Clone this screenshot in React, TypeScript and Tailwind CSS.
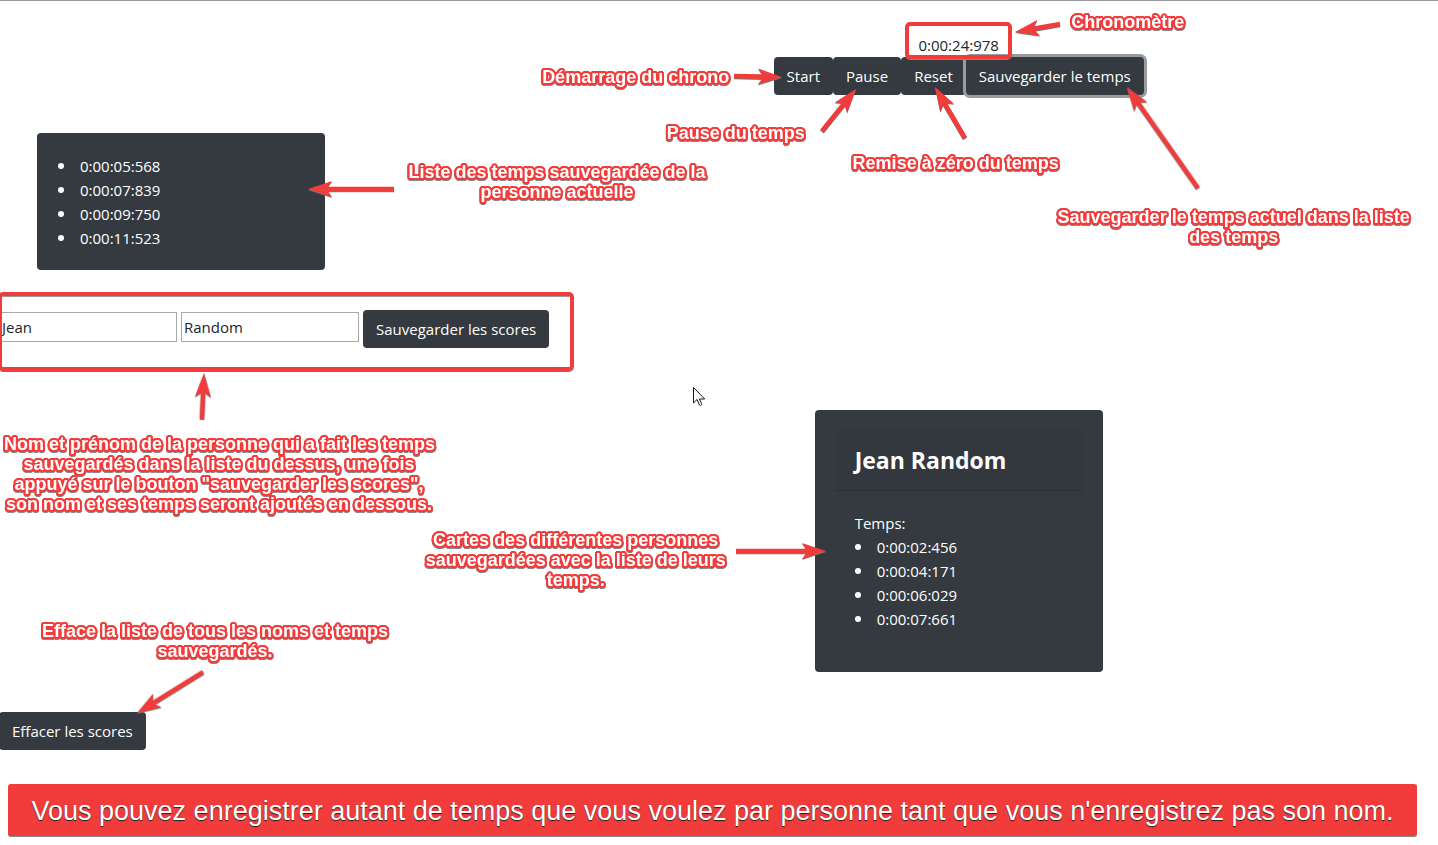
import { useState, type ReactNode } from "react";

const currentTimes = ["0:00:05:568", "0:00:07:839", "0:00:09:750", "0:00:11:523"];
const savedTimes = ["0:00:02:456", "0:00:04:171", "0:00:06:029", "0:00:07:661"];

function DarkButton({ children, className = "" }: { children: ReactNode; className?: string }) {
  return (
    <button
      type="button"
      className={`h-[38px] rounded-sm bg-[#343a40] px-[13px] leading-6 whitespace-nowrap text-white ${className}`}
    >
      {children}
    </button>
  );
}

type Segment = { from: [number, number]; to: [number, number] };

/* Each arrow is drawn pointing right with its tip at the origin, then turned. */
function Arrows({ segments }: { segments: Segment[] }) {
  return (
    <svg
      width="1"
      height="1"
      aria-hidden="true"
      className="absolute top-0 left-0 overflow-visible fill-[#f23c3c] drop-shadow-[0_1px_0_#777]"
    >
      {segments.map(({ from, to }) => {
        const dx = to[0] - from[0];
        const dy = to[1] - from[1];
        const len = Math.hypot(dx, dy);
        const angle = (Math.atan2(dy, dx) * 180) / Math.PI;
        return (
          <path
            key={from.join()}
            transform={`translate(${to[0]} ${to[1]}) rotate(${angle})`}
            d={`M0 0 L-24 -8 L-20 -2.3 L${-len} -2.3 L${-len} 2.3 L-20 2.3 L-24 8 Z`}
          />
        );
      })}
    </svg>
  );
}

function Note({ lines, className }: { lines: string[]; className: string }) {
  return (
    <p
      className={`absolute text-center font-['Liberation_Sans',Arial,sans-serif] text-[18px] leading-5 font-bold whitespace-nowrap text-white drop-shadow-[0_1px_0_#888] [text-shadow:2px_0_#f23c3c,-2px_0_#f23c3c,0_2px_#f23c3c,0_-2px_#f23c3c,2px_1px_#f23c3c,2px_-1px_#f23c3c,-2px_1px_#f23c3c,-2px_-1px_#f23c3c,1px_2px_#f23c3c,-1px_2px_#f23c3c,1px_-2px_#f23c3c,-1px_-2px_#f23c3c,0_0_1px_#f23c3c] ${className}`}
    >
      {lines.map((line) => (
        <span key={line} className="block">
          {line}
        </span>
      ))}
    </p>
  );
}

function TimeList({ times }: { times: string[] }) {
  return (
    <ul>
      {times.map((time) => (
        <li key={time} className="flex items-center gap-4">
          <span className="size-[6px] rounded-full bg-white" />
          {time}
        </li>
      ))}
    </ul>
  );
}

const leftArrows: Segment[] = [
  { from: [394, 189], to: [308, 189] },
  { from: [202, 419], to: [204, 373] },
  { from: [203, 672], to: [137, 713] },
];

const rightArrows: Segment[] = [
  { from: [101, 24], to: [56, 32] },
  { from: [-225, 76], to: [-177, 77] },
  { from: [-137, 131], to: [-103, 89] },
  { from: [6, 138], to: [-24, 87] },
  { from: [239, 188], to: [168, 87] },
  { from: [-223, 551], to: [-133, 551] },
];

export default function App() {
  const [firstName, setFirstName] = useState("Jean");
  const [lastName, setLastName] = useState("Random");
  const field =
    "h-[30px] w-[178px] border border-[#a9a9a9] bg-white px-[2px] text-[#212529] outline-none";

  return (
    <main className="relative overflow-hidden border-t border-[#9b9b9b] bg-white pb-2 font-['Open_Sans','Noto_Sans',sans-serif] text-[15px] leading-6 text-[#212529]">
      <section className="grid grid-cols-3 pt-8">
        <div className="col-span-2 col-start-2 flex flex-col items-center">
          <div className="relative">
            <time>0:00:24:978</time>
            <span className="pointer-events-none absolute -inset-x-[13px] -top-[11px] -bottom-[2px] z-10 rounded-[5px] border-4 border-[#f23c3c] shadow-[0_1px_0_#888]" />
          </div>
          <div className="flex">
            <DarkButton>Start</DarkButton>
            <DarkButton>Pause</DarkButton>
            <DarkButton>Reset</DarkButton>
            <DarkButton className="shadow-[0_0_0_3px_#999c9f]">Sauvegarder le temps</DarkButton>
          </div>
        </div>
      </section>

      <section className="mt-[38px] ml-[37px] w-72 rounded-sm bg-[#343a40] px-[21px] pt-[21px] pb-5 text-white">
        <TimeList times={currentTimes} />
      </section>

      <form className="relative mt-10 -ml-px flex w-fit gap-1">
        <input
          aria-label="Prénom"
          className={`mt-[2px] ${field}`}
          value={firstName}
          onChange={(e) => setFirstName(e.target.value)}
        />
        <input
          aria-label="Nom"
          className={`mt-[2px] ${field}`}
          value={lastName}
          onChange={(e) => setLastName(e.target.value)}
        />
        <DarkButton>Sauvegarder les scores</DarkButton>
        <span className="pointer-events-none absolute -top-[18px] -right-[25px] -bottom-[23px] -left-px rounded-[5px] border-4 border-[#f23c3c] shadow-[0_1px_0_#777,inset_0_1px_0_#999]" />
      </form>

      <section className="mt-[62px] grid grid-cols-3">
        <article className="col-span-2 col-start-2 w-72 justify-self-center rounded-sm bg-[#343a40] px-5 pt-5 pb-[41px] text-white">
          <h2 className="rounded-t-sm border-b border-[#2d3237] bg-[#33383e] px-5 py-[18px] text-[23px] leading-6 font-bold">
            Jean Random
          </h2>
          <div className="px-5 pt-5">
            <p>Temps:</p>
            <TimeList times={savedTimes} />
          </div>
        </article>
      </section>

      <DarkButton className="mt-10 -ml-px block">Effacer les scores</DarkButton>

      <p className="mt-[34px] mr-[21px] ml-2 rounded-[3px] bg-[#f23c3c] pt-[11px] pb-[9px] text-center font-['Liberation_Sans',Arial,sans-serif] text-[27px] leading-8 text-white shadow-[0_1px_0_#888] [text-shadow:0_1px_1px_#222]">
        Vous pouvez enregistrer autant de temps que vous voulez par personne tant que vous
        n'enregistrez pas son nom.
      </p>

      <div className="pointer-events-none absolute -top-px left-0 z-20">
        <Arrows segments={leftArrows} />
        <Note
          className="top-[162px] left-[407px] w-[300px]"
          lines={["Liste des temps sauvegardée de la", "personne actuelle"]}
        />
        <Note
          className="top-[434px] left-[4px] w-[430px]"
          lines={[
            "Nom et prénom de la personne qui a fait les temps",
            "sauvegardés dans la liste du dessus, une fois",
            'appuyé sur le bouton "sauvegarder les scores",',
            "son nom et ses temps seront ajoutés en dessous.",
          ]}
        />
        <Note
          className="top-[621px] left-[40px] w-[350px]"
          lines={["Efface la liste de tous les noms et temps", "sauvegardés."]}
        />
        <svg
          width="13"
          height="20"
          viewBox="0 0 13 20"
          aria-hidden="true"
          className="absolute top-[387px] left-[693px] fill-white stroke-[#15151f]"
        >
          <path d="M.5.5v15.4l3.6-3.4 2.3 5.3c.3.7 1 .9 1.6.6.7-.3.9-1 .6-1.6L6.4 12H11.7Z" />
        </svg>
      </div>

      <div className="pointer-events-none absolute -top-px left-2/3 z-20">
        <Arrows segments={rightArrows} />
        <Note className="top-[12px] left-[109px] w-[120px]" lines={["Chronomètre"]} />
        <Note className="top-[67px] -left-[423px] w-[200px]" lines={["Démarrage du chrono"]} />
        <Note className="top-[123px] -left-[293px] w-[140px]" lines={["Pause du temps"]} />
        <Note className="top-[153px] -left-[108px] w-[210px]" lines={["Remise à zéro du temps"]} />
        <Note
          className="top-[207px] left-[95px] w-[360px]"
          lines={["Sauvegarder le temps actuel dans la liste", "des temps"]}
        />
        <Note
          className="top-[530px] -left-[533px] w-[300px]"
          lines={["Cartes des différentes personnes", "sauvegardées avec la liste de leurs", "temps."]}
        />
      </div>
    </main>
  );
}
